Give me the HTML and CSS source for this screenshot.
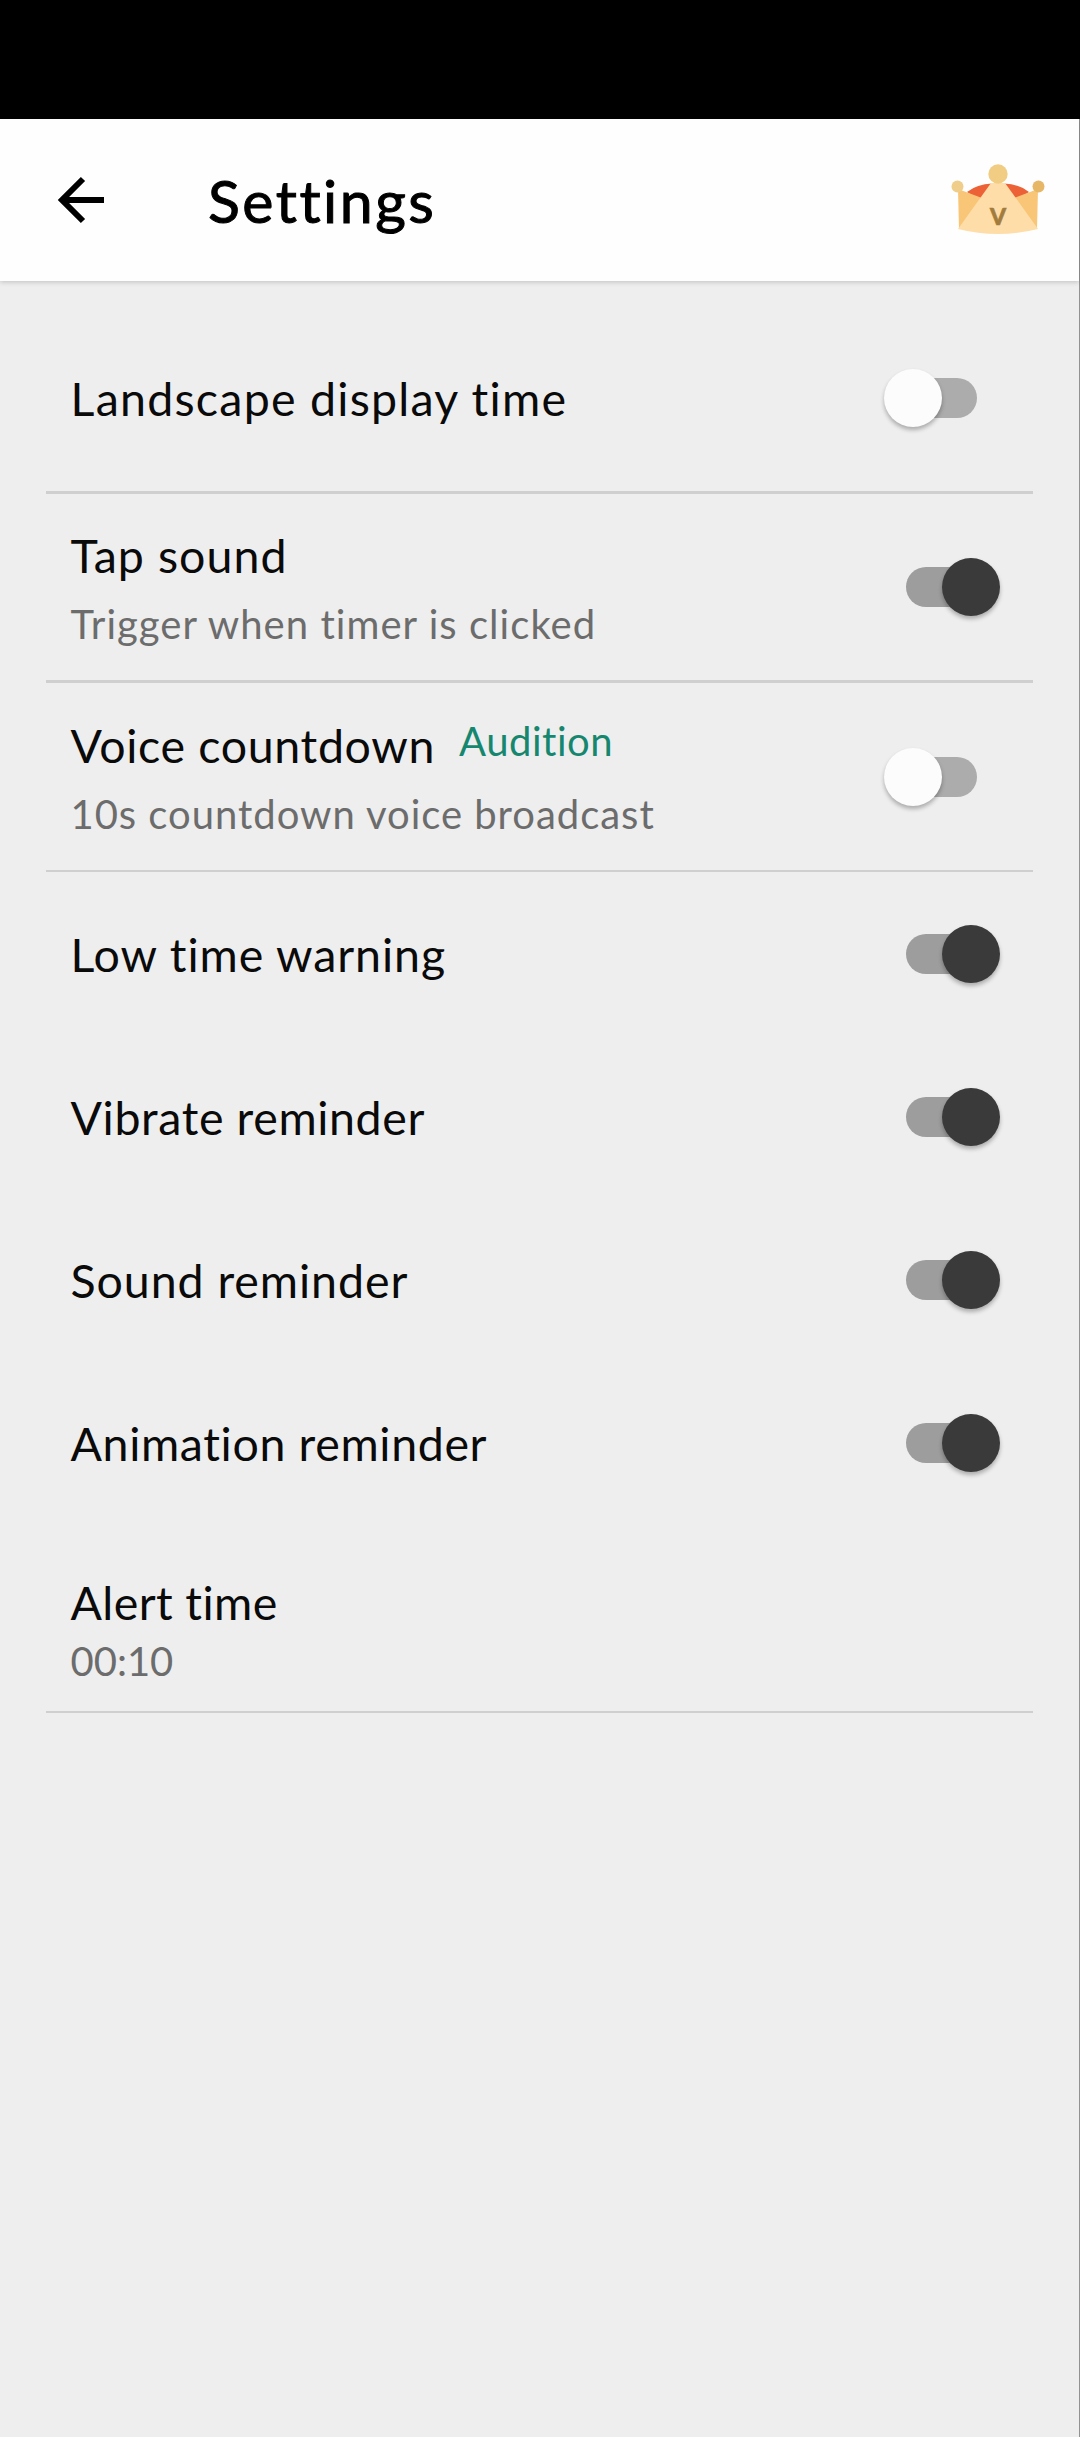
FILE: index.html
```html
<!DOCTYPE html>
<html lang="en">
<head>
<meta charset="utf-8">
<title>Settings</title>
<link rel="stylesheet" href="styles.css">
</head>
<body>
<div class="screen">
  <div class="status-bar"></div>
  <div class="page">
    <header class="app-bar">
      <svg class="back" viewBox="0 0 64 60" fill="none" stroke="#000" stroke-width="6">
        <path d="M11 30H54M33 9L12 30L33 51"/>
      </svg>
      <h1 class="title">Settings</h1>
      <svg class="crown" viewBox="0 0 120 90">
        <path d="M27 37Q37 29 52 28.500L42 47ZM89 37Q79 29 64 28.500L74 47Z" fill="#ec6236"/>
        <path d="M18 34L42 43L50 52L19 74ZM98 34L74 43L66 52L97 74Z" fill="#f9c577"/>
        <path d="M51 28H65L98 74Q58 84 18 74Z" fill="#fedda9"/>
        <circle cx="17.500" cy="31.500" r="6" fill="#efce8c"/>
        <circle cx="98.500" cy="31.500" r="6" fill="#e7b768"/>
        <circle cx="58" cy="19" r="9.700" fill="#f1cd84"/>
        <text class="crown-letter" x="58" y="69.500" text-anchor="middle">V</text>
      </svg>
    </header>
    <main class="list">
      <section class="row first divided">
        <div class="label w-landscape">Landscape display time</div>
        <span class="switch"></span>
      </section>
      <section class="row double divided">
        <div>
          <div class="label w-tap">Tap sound</div>
          <div class="hint w-trigger">Trigger when timer is clicked</div>
        </div>
        <span class="switch on"></span>
      </section>
      <section class="row double divided thin">
        <div>
          <div class="label-line">
            <div class="label w-voice">Voice countdown</div>
            <a class="link w-audition">Audition</a>
          </div>
          <div class="hint w-broadcast">10s countdown voice broadcast</div>
        </div>
        <span class="switch"></span>
      </section>
      <section class="row">
        <div class="label w-low">Low time warning</div>
        <span class="switch on"></span>
      </section>
      <section class="row">
        <div class="label w-vibrate">Vibrate reminder</div>
        <span class="switch on"></span>
      </section>
      <section class="row">
        <div class="label w-sound">Sound reminder</div>
        <span class="switch on"></span>
      </section>
      <section class="row">
        <div class="label w-animation">Animation reminder</div>
        <span class="switch on"></span>
      </section>
      <section class="row alert divided thin">
        <div>
          <div class="label w-alert">Alert time</div>
          <div class="hint">00:10</div>
        </div>
      </section>
    </main>
  </div>
</div>
</body>
</html>
```
FILE: styles.css
```css
* { box-sizing: border-box; }

body {
  margin: 0;
  background: #eee;
  font-family: Lato, "Noto Sans", sans-serif;
  font-variant-ligatures: none;
  color: #0a0a0a;
}

.screen {
  display: flex;
  flex-direction: column;
  width: 1080px;
  height: 2437px;
}

.status-bar { height: 119px; background: #000; }

.page {
  flex: 1;
  background: #eee;
  border-right: 1px solid #929292;
}

.app-bar {
  display: flex;
  align-items: flex-start;
  height: 162px;
  padding: 36px 19px 0 50px;
  background: #fefefe;
  box-shadow: 0 1px 5px rgba(0, 0, 0, .2);
}

.back { width: 64px; height: 60px; margin-top: 15px; }

.title {
  flex: 1;
  margin: 10px 0 0 94px;
  font-size: 59px;
  line-height: 72px;
  font-weight: 400;
  letter-spacing: 2.5px;
  color: #000;
  -webkit-text-stroke: 1px #000;
}

.crown { width: 120px; height: 90px; }

.crown-letter {
  font-size: 23px;
  font-weight: 900;
  fill: #a27c3c;
  stroke: #a27c3c;
  stroke-width: .6px;
}

.row {
  display: flex;
  justify-content: space-between;
  align-items: center;
  height: 163px;
  margin: 0 46px;
  padding: 0 33px 0 24.5px;
}

.divided { border-bottom: 3px solid #cfcfcf; }
.thin { border-bottom-width: 2px; }

.first { height: 213px; padding-top: 35px; padding-bottom: 11px; }
.double { height: 189px; }

.label {
  font-size: 46.5px;
  line-height: 60px;
}

.label-line { display: flex; gap: 24px; }

.hint, .link { font-size: 40px; line-height: 50px; }
.hint { margin-top: 14px; color: #6c6c6c; }
.link { margin-top: 1px; color: #16876f; }

.alert { height: 189px; align-items: flex-end; padding-bottom: 25px; }
.alert .hint { margin-top: 4px; }

.switch {
  position: relative;
  flex: none;
  width: 116px;
  height: 58px;
}

.switch::before {
  content: "";
  position: absolute;
  left: 6px;
  top: 9px;
  width: 87px;
  height: 40px;
  border-radius: 20px;
  background: #acacac;
}

.switch::after {
  content: "";
  position: absolute;
  left: 0;
  top: 0;
  width: 58px;
  height: 58px;
  border-radius: 50%;
  background: #fcfcfc;
  box-shadow: 0 3px 4px rgba(0, 0, 0, .28);
}

.switch.on::before { left: 22px; background: #9d9d9d; }
.switch.on::after { left: 58px; background: #3a3a3a; }

/* Tracking per label */
.w-landscape { letter-spacing: 1.25px; }
.w-tap { letter-spacing: 1.05px; }
.w-trigger { letter-spacing: 1.05px; }
.w-voice { letter-spacing: .66px; }
.w-audition { letter-spacing: .54px; }
.w-broadcast { letter-spacing: .97px; }
.w-low { letter-spacing: .92px; }
.w-vibrate { letter-spacing: .63px; }
.w-sound { letter-spacing: .94px; }
.w-animation { letter-spacing: .65px; }
.w-alert { letter-spacing: .41px; }
```
